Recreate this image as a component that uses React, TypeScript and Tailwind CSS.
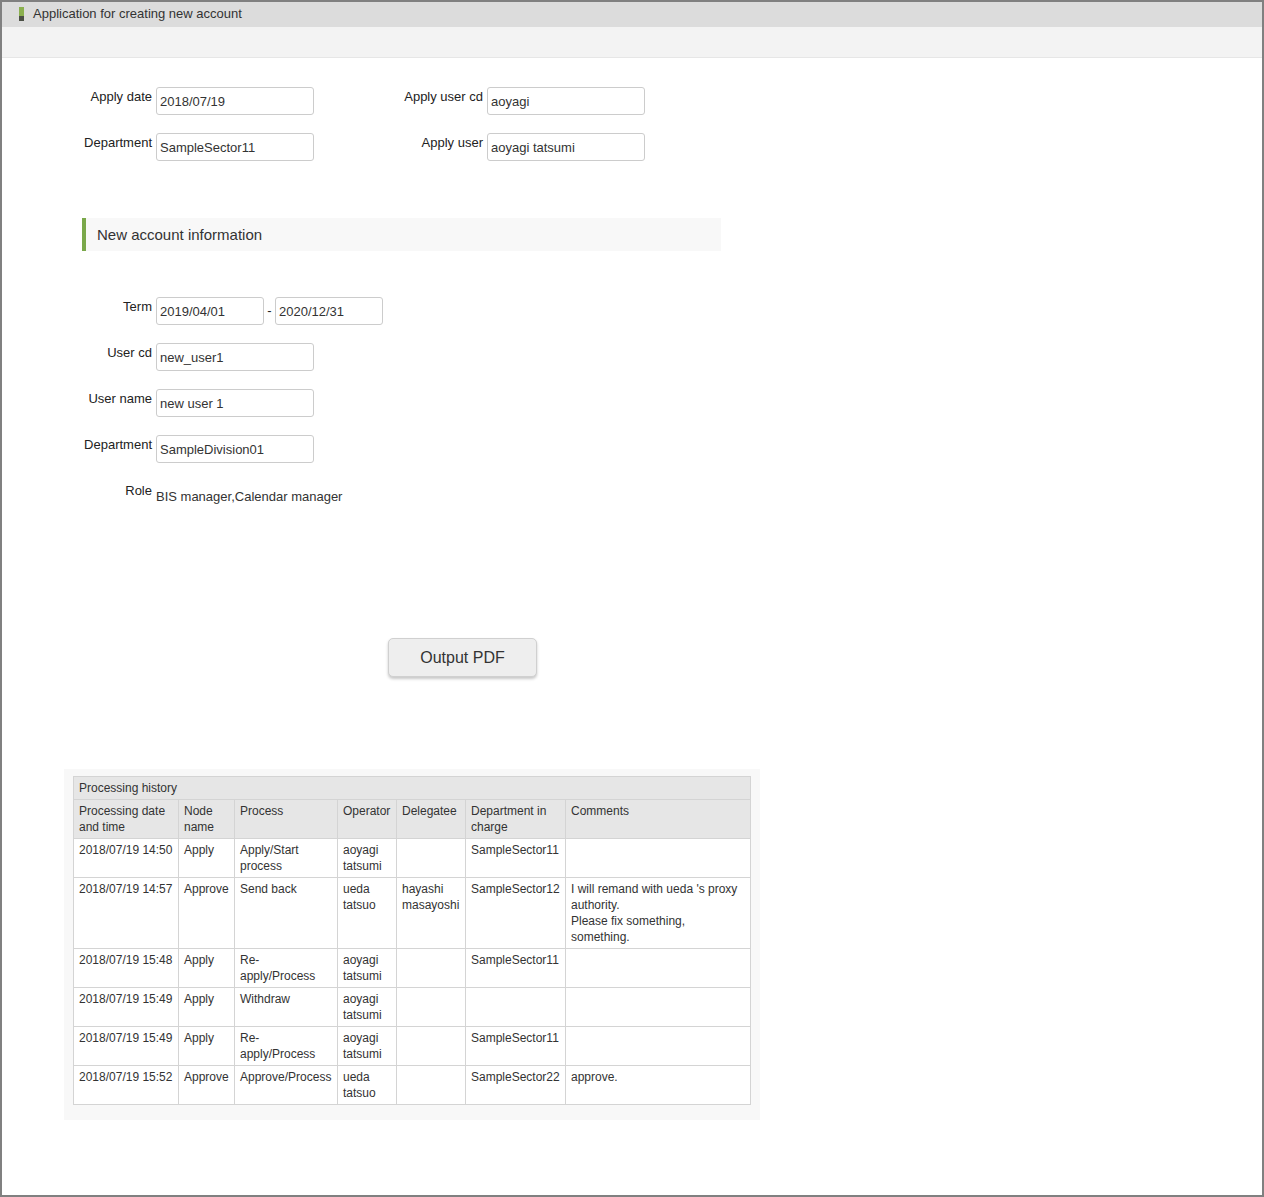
import React from "react";

const font = "font-['Liberation_Sans',Arial,sans-serif]";

function Field({ value, w = "w-[158px]" }: { value: string; w?: string }) {
  return (
    <input
      readOnly
      value={value}
      className={`${w} h-[28px] box-border border border-[#cccccc] rounded-[3px] px-[3px] text-[13px] text-[#333] bg-white outline-none ${font}`}
    />
  );
}

function Label({ text, w }: { text: string; w: string }) {
  return (
    <div className={`${w} shrink-0 text-right text-[13px] leading-[15px] pt-[2px] pr-[4px] text-[#222]`}>{text}</div>
  );
}

const rows: string[][] = [
  ["2018/07/19 14:50", "Apply", "Apply/Start process", "aoyagi tatsumi", "", "SampleSector11", ""],
  [
    "2018/07/19 14:57",
    "Approve",
    "Send back",
    "ueda tatsuo",
    "hayashi masayoshi",
    "SampleSector12",
    "I will remand with ueda 's proxy authority.\nPlease fix something, something.",
  ],
  ["2018/07/19 15:48", "Apply", "Re-apply/Process", "aoyagi tatsumi", "", "SampleSector11", ""],
  ["2018/07/19 15:49", "Apply", "Withdraw", "aoyagi tatsumi", "", "", ""],
  ["2018/07/19 15:49", "Apply", "Re-apply/Process", "aoyagi tatsumi", "", "SampleSector11", ""],
  ["2018/07/19 15:52", "Approve", "Approve/Process", "ueda tatsuo", "", "SampleSector22", "approve."],
];

const headers = [
  "Processing date and time",
  "Node name",
  "Process",
  "Operator",
  "Delegatee",
  "Department in charge",
  "Comments",
];
const widths = [105, 56, 103, 59, 69, 100, 185];

export default function App() {
  const cell = "border border-[#d4d4d4] px-[5px] py-[3px] leading-[16px] text-[12px] align-top text-left font-normal";
  return (
    <div className={`w-[1264px] h-[1197px] box-border border-2 border-[#808080] bg-white text-[#333] ${font}`}>
      <div className="h-[25px] bg-[#dcdcdc] flex items-start pl-[17px]">
        <div className="mt-[5px] w-[5px] h-[14px] flex flex-col">
          <div className="h-[9px] bg-[#8bb04f]" />
          <div className="h-[5px] bg-[#4b4f45]" />
        </div>
        <div className="ml-[9px] pt-[4px] text-[13px] leading-[15px] text-[#333]">Application for creating new account</div>
      </div>
      <div className="h-[31px] box-border bg-[#f3f3f3] border-b border-[#e6e6e6]" />

      <div className="pt-[29px]">
        <div className="flex flex-col gap-[18px]">
          <div className="flex">
            <Label text="Apply date" w="w-[154px]" />
            <Field value="2018/07/19" />
            <Label text="Apply user cd" w="w-[173px]" />
            <Field value="aoyagi" />
          </div>
          <div className="flex">
            <Label text="Department" w="w-[154px]" />
            <Field value="SampleSector11" />
            <Label text="Apply user" w="w-[173px]" />
            <Field value="aoyagi tatsumi" />
          </div>
        </div>

        <div className="mt-[57px] ml-[80px] w-[639px] h-[33px] bg-[#f8f8f8] border-l-4 border-[#7aa84a] flex items-center pl-[11px] text-[15px] leading-[18px] text-[#333]">
          New account information
        </div>

        <div className="mt-[46px] flex flex-col gap-[18px]">
          <div className="flex">
            <Label text="Term" w="w-[154px]" />
            <Field value="2019/04/01" w="w-[108px]" />
            <div className="w-[11px] text-center text-[13px] leading-[28px] text-[#222]">-</div>
            <Field value="2020/12/31" w="w-[108px]" />
          </div>
          <div className="flex">
            <Label text="User cd" w="w-[154px]" />
            <Field value="new_user1" />
          </div>
          <div className="flex">
            <Label text="User name" w="w-[154px]" />
            <Field value="new user 1" />
          </div>
          <div className="flex">
            <Label text="Department" w="w-[154px]" />
            <Field value="SampleDivision01" />
          </div>
          <div className="flex h-[28px]">
            <Label text="Role" w="w-[154px]" />
            <div className="pt-[8px] text-[13px] leading-[15px] text-[#333]">BIS manager,Calendar manager</div>
          </div>
        </div>

        <button
          className={`block mt-[129px] ml-[386px] w-[149px] h-[39px] box-border rounded-[5px] border border-[#d0d0d0] bg-[#eeeeee] shadow-[0_2px_3px_rgba(0,0,0,0.22)] text-[16px] text-[#333] ${font}`}
        >
          Output PDF
        </button>

        <div className="mt-[92px] ml-[62px] w-[696px] h-[351px] bg-[#f8f8f8] pt-[7px] pl-[9px]">
          <table className="w-[677px] table-fixed border-collapse border border-[#d4d4d4] text-[#333]">
            <colgroup>
              {widths.map((w, i) => (
                <col key={i} style={{ width: w }} />
              ))}
            </colgroup>
            <thead>
              <tr className="bg-[#e6e6e6]">
                <th colSpan={7} className={cell}>
                  Processing history
                </th>
              </tr>
              <tr className="bg-[#e6e6e6]">
                {headers.map((h) => (
                  <th key={h} className={cell}>
                    {h}
                  </th>
                ))}
              </tr>
            </thead>
            <tbody>
              {rows.map((r, i) => (
                <tr key={i} className="bg-white">
                  {r.map((c, j) => (
                    <td key={j} className={cell}>
                      {c.split("\n").map((line, k) => (
                        <div key={k}>{line}</div>
                      ))}
                    </td>
                  ))}
                </tr>
              ))}
            </tbody>
          </table>
        </div>
      </div>
    </div>
  );
}
